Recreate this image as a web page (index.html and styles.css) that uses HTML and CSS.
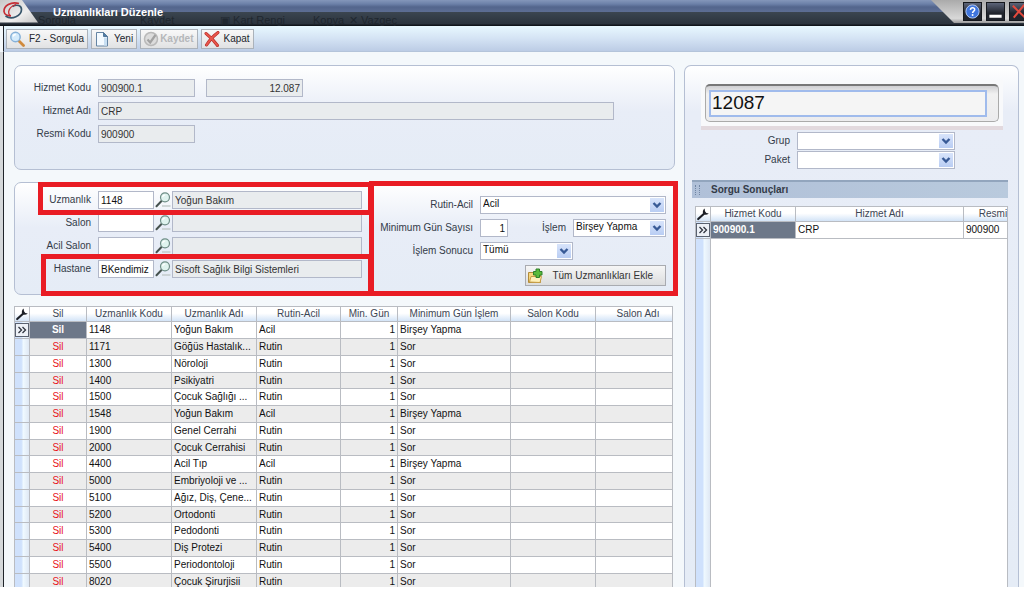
FILE: index.html
```html
<!DOCTYPE html>
<html lang="tr">
<head>
<meta charset="utf-8">
<title>Uzmanlıkları Düzenle</title>
<link rel="stylesheet" href="styles.css">
</head>
<body>
<svg class="defs" aria-hidden="true">
  <symbol id="lens" viewBox="0 0 16 16">
    <path d="M7 14h8.500" stroke="#c3cbcb" stroke-width="1.500"/>
    <path d="M6.500 9 1.500 14.200" stroke="#46524f" stroke-width="2" stroke-linecap="round"/>
    <circle cx="10" cy="5.300" r="4.500" fill="#dff3ef" stroke="#6f8e87" stroke-width="1.200"/>
    <path d="M7.600 5.200Q8 3 10.200 3" stroke="#fff" fill="none" stroke-width="1.200"/>
  </symbol>
  <symbol id="wrench" viewBox="0 0 14 14">
    <path d="M2.200 12 8 6.800" stroke="#1c1f26" stroke-width="2.200" stroke-linecap="round"/>
    <path d="M8.600 1.500C7 2.800 6.300 5 7.200 6.700c1.200 1.600 3.700 1.500 5.600-.2L10.300 5.900 9 4.300z" fill="#1c1f26"/>
  </symbol>
  <symbol id="chevrons" viewBox="0 0 12 12">
    <path d="m2.500 3 3 3-3 3M6.500 3l3 3-3 3" fill="none" stroke="#30353f" stroke-width="1.300"/>
  </symbol>
</svg>
<div class="window">
  <header class="titlebar">
    <div class="ghost" aria-hidden="true">
      <span>Sorgula</span><span>Kaydet</span><span>▣ Kart Rengi</span><span>Kopya</span><span>✕ Vazgeç</span>
    </div>
    <svg class="logo" viewBox="0 0 38 24" aria-hidden="true">
      <defs><linearGradient id="tab" x1="0" y1="0" x2="1" y2="1"><stop offset="0" stop-color="#c9c9c9"/><stop offset=".6" stop-color="#eee"/><stop offset="1" stop-color="#c4c4c4"/></linearGradient></defs>
      <path d="M0 0H22L38 22.500H0z" fill="url(#tab)"/>
      <path d="M19 3.500C11 1 3.500 6 4 11.500c.4 3.500 4 4.500 7 4" fill="none" stroke="#c52d34" stroke-width="1.700"/>
      <path d="M5.500 16C12 20.500 21.500 15.500 21.500 9.500 21.500 5.500 17 4 12.500 6.500" fill="none" stroke="#37566b" stroke-width="1.700"/>
      <path d="M10.500 16.500C7 12.500 8.500 7 16 4.500" fill="none" stroke="#c52d34" stroke-width="1.300"/>
    </svg>
    <h1 class="title">Uzmanlıkları Düzenle</h1>
    <div class="controls">
      <button class="control" type="button" aria-label="Yardım"><svg viewBox="0 0 18 18"><circle cx="9" cy="9" r="7" fill="#3f75dd" stroke="#b9d0fa"/><path d="M6.800 7.300Q6.900 5 9.100 5T11.300 7.100C11.300 8.600 9.100 8.700 9.100 10.600" fill="none" stroke="#fff" stroke-width="1.600"/><circle cx="9.100" cy="12.700" r="1" fill="#fff"/></svg></button>
      <button class="control" type="button" aria-label="Küçült"><svg viewBox="0 0 18 18"><path d="M2.500 12.500h13v3h-13z" fill="#fff"/></svg></button>
      <button class="control" type="button" aria-label="Pencereyi kapat"><svg viewBox="0 0 18 18"><path d="M3 3 16 15.500M15 2 4 15.500" stroke="#e2493d" stroke-width="2.200"/></svg></button>
    </div>
  </header>

  <nav class="toolbar">
    <button class="tool" type="button"><svg viewBox="0 0 16 16"><path d="m9.500 9.500 5 5" stroke="#d08a3c" stroke-width="2.800" stroke-linecap="round"/><circle cx="6.500" cy="6" r="4.700" fill="#d4ebfb" stroke="#86b1d8" stroke-width="1.500"/><path d="M4 5.500Q4.500 3.500 6.800 3.500" fill="none" stroke="#fff" stroke-width="1.300"/></svg>F2 - Sorgula</button>
    <button class="tool" type="button"><svg viewBox="0 0 16 16"><path d="M2.500 1.500h7l4 4v9.500h-11z" fill="#f3faff" stroke="#6585a4"/><path d="M9.500 1.500v4h4z" fill="#4e7ea8" stroke="#55789a"/><path d="M10 6.500h3v8h-3z" fill="#c8dff2"/></svg>Yeni</button>
    <button class="tool" type="button" disabled><svg viewBox="0 0 16 16"><circle cx="8" cy="8" r="6.500" fill="#dcdcdc" stroke="#b9b9b9" stroke-width="1.500"/><path d="m4.500 8.500 2.700 3L12.500 4" fill="none" stroke="#a2a2a2" stroke-width="2.200"/></svg>Kaydet</button>
    <button class="tool" type="button"><svg viewBox="0 0 16 16"><path d="M2 2.500Q8 7 13.500 14.500M14 1.500Q7 6.500 2.500 14" fill="none" stroke="#b82a25" stroke-width="3" stroke-linecap="round"/><path d="M2 2.500Q8 7 13.500 14.500M14 1.500Q7 6.500 2.500 14" fill="none" stroke="#e8574c" stroke-width="1.700" stroke-linecap="round"/></svg>Kapat</button>
  </nav>

  <main class="content">
    <div class="editor">
      <section class="panel service">
        <label for="kod">Hizmet Kodu</label>
        <div class="pair"><input id="kod" class="box code" value="900900.1" readonly><input class="box code num" aria-label="Hizmet numarası" value="12.087" readonly></div>
        <label for="ad">Hizmet Adı</label>
        <input id="ad" class="box name" value="CRP" readonly>
        <label for="resmi">Resmi Kodu</label>
        <input id="resmi" class="box code" value="900900" readonly>
      </section>

      <section class="panel criteria">
        <div class="lookups">
          <label for="uzm">Uzmanlık</label>
          <div class="lookup"><input id="uzm" class="box" value="1148"><button class="find" type="button" aria-label="Uzmanlık ara"><svg><use href="#lens"/></svg></button><input class="box" aria-label="Uzmanlık adı" value="Yoğun Bakım" readonly></div>
          <label for="salon">Salon</label>
          <div class="lookup"><input id="salon" class="box"><button class="find" type="button" aria-label="Salon ara"><svg><use href="#lens"/></svg></button><input class="box" aria-label="Salon adı" readonly></div>
          <label for="acil">Acil Salon</label>
          <div class="lookup"><input id="acil" class="box"><button class="find" type="button" aria-label="Acil salon ara"><svg><use href="#lens"/></svg></button><input class="box" aria-label="Acil salon adı" readonly></div>
          <label for="has">Hastane</label>
          <div class="lookup"><input id="has" class="box" value="BKendimiz"><button class="find" type="button" aria-label="Hastane ara"><svg><use href="#lens"/></svg></button><input class="box" aria-label="Hastane adı" value="Sisoft Sağlık Bilgi Sistemleri" readonly></div>
        </div>
        <div class="options">
          <label for="rutin">Rutin-Acil</label>
          <select id="rutin" class="box wide"><option>Acil</option></select>
          <label for="gun">Minimum Gün Sayısı</label>
          <input id="gun" class="box num" value="1">
          <label for="islem">İşlem</label>
          <select id="islem" class="box"><option>Birşey Yapma</option></select>
          <label for="sonuc">İşlem Sonucu</label>
          <select id="sonuc" class="box half"><option>Tümü</option></select>
          <button class="add" type="button"><svg viewBox="0 0 16 16"><path d="M1.500 4.500h5l1 2h6v8h-12z" fill="#f6d77e" stroke="#b28b39"/><path d="M2.500 14 4 8.500h10.500l-1.500 6z" fill="#fff0b8" stroke="#c79d46"/><path d="M9 1h3.500v2.500H15V7h-2.500v2.500H9V7H6.500V3.500H9z" fill="#5abb3a" stroke="#2f812a"/></svg><span>Tüm Uzmanlıkları Ekle</span></button>
        </div>
        <div class="mark mark-top"></div>
        <div class="mark mark-bottom"></div>
        <div class="mark mark-right"></div>
      </section>

      <div class="gridbox">
        <table class="data specialties">
          <colgroup><col class="c-gutter"><col class="c-small"><col><col><col class="c-rutin"><col class="c-small"><col class="c-action"><col><col></colgroup>
          <thead><tr><th><svg class="wrench"><use href="#wrench"/></svg></th><th>Sil</th><th>Uzmanlık Kodu</th><th>Uzmanlık Adı</th><th>Rutin-Acil</th><th>Min. Gün</th><th>Minimum Gün İşlem</th><th>Salon Kodu</th><th>Salon Adı</th></tr></thead>
          <tbody>
            <tr class="current"><td><svg class="pointer"><use href="#chevrons"/></svg></td><td>Sil</td><td>1148</td><td>Yoğun Bakım</td><td>Acil</td><td>1</td><td>Birşey Yapma</td><td></td><td></td></tr>
            <tr><td></td><td>Sil</td><td>1171</td><td>Göğüs Hastalık...</td><td>Rutin</td><td>1</td><td>Sor</td><td></td><td></td></tr>
            <tr><td></td><td>Sil</td><td>1300</td><td>Nöroloji</td><td>Rutin</td><td>1</td><td>Sor</td><td></td><td></td></tr>
            <tr><td></td><td>Sil</td><td>1400</td><td>Psikiyatri</td><td>Rutin</td><td>1</td><td>Sor</td><td></td><td></td></tr>
            <tr><td></td><td>Sil</td><td>1500</td><td>Çocuk Sağlığı ...</td><td>Rutin</td><td>1</td><td>Sor</td><td></td><td></td></tr>
            <tr><td></td><td>Sil</td><td>1548</td><td>Yoğun Bakım</td><td>Acil</td><td>1</td><td>Birşey Yapma</td><td></td><td></td></tr>
            <tr><td></td><td>Sil</td><td>1900</td><td>Genel Cerrahi</td><td>Rutin</td><td>1</td><td>Sor</td><td></td><td></td></tr>
            <tr><td></td><td>Sil</td><td>2000</td><td>Çocuk Cerrahisi</td><td>Rutin</td><td>1</td><td>Sor</td><td></td><td></td></tr>
            <tr><td></td><td>Sil</td><td>4400</td><td>Acil Tıp</td><td>Acil</td><td>1</td><td>Birşey Yapma</td><td></td><td></td></tr>
            <tr><td></td><td>Sil</td><td>5000</td><td>Embriyoloji ve ...</td><td>Rutin</td><td>1</td><td>Sor</td><td></td><td></td></tr>
            <tr><td></td><td>Sil</td><td>5100</td><td>Ağız, Diş, Çene...</td><td>Rutin</td><td>1</td><td>Sor</td><td></td><td></td></tr>
            <tr><td></td><td>Sil</td><td>5200</td><td>Ortodonti</td><td>Rutin</td><td>1</td><td>Sor</td><td></td><td></td></tr>
            <tr><td></td><td>Sil</td><td>5300</td><td>Pedodonti</td><td>Rutin</td><td>1</td><td>Sor</td><td></td><td></td></tr>
            <tr><td></td><td>Sil</td><td>5400</td><td>Diş Protezi</td><td>Rutin</td><td>1</td><td>Sor</td><td></td><td></td></tr>
            <tr><td></td><td>Sil</td><td>5500</td><td>Periodontoloji</td><td>Rutin</td><td>1</td><td>Sor</td><td></td><td></td></tr>
            <tr><td></td><td>Sil</td><td>8020</td><td>Çocuk Şirurjisii</td><td>Rutin</td><td>1</td><td>Sor</td><td></td><td></td></tr>
          </tbody>
        </table>
      </div>
    </div>

    <aside class="panel search">
      <div class="searchframe"><div class="searchwell"><input class="query" aria-label="Sorgu" value="12087"></div></div>
      <div class="filters">
        <label for="grup">Grup</label><select id="grup" class="box"><option></option></select>
        <label for="paket">Paket</label><select id="paket" class="box"><option></option></select>
      </div>
      <h2 class="results-title"><span class="grip"></span>Sorgu Sonuçları</h2>
      <div class="results">
        <table class="data found">
          <colgroup><col class="c-gutter"><col><col class="c-name"><col></colgroup>
          <thead><tr><th><svg class="wrench"><use href="#wrench"/></svg></th><th>Hizmet Kodu</th><th>Hizmet Adı</th><th>Resmi Kodu</th></tr></thead>
          <tbody><tr class="current"><td><svg class="pointer"><use href="#chevrons"/></svg></td><td>900900.1</td><td>CRP</td><td>900900</td></tr></tbody>
        </table>
      </div>
    </aside>
  </main>
</div>
</body>
</html>
```
FILE: styles.css
```css
* { box-sizing: border-box; }

body {
  margin: 0;
  height: 100vh;
  padding-bottom: 19px;
  overflow: hidden;
  background: #fff;
  color: #333b48;
  font: 10px/14px "Liberation Sans", Arial, sans-serif;
}

input, select, button { font: inherit; color: inherit; margin: 0; border-radius: 0; }
svg { display: block; }
.defs { position: absolute; width: 0; height: 0; }

.window {
  display: flex;
  flex-direction: column;
  height: 100%;
  overflow: hidden;
  background: #f4f8fb;
}

/* Title bar */
.titlebar {
  position: relative;
  display: flex;
  flex: none;
  height: 26px;
  background: linear-gradient(#8496ba 0, #6c80a8 4px, #53658c 7px, #5d6e94 12px, #3b4550 12px, #2b333d 24px, #10151b 25px, #10151b);
}
.logo { width: 38px; height: 24px; flex: none; }
.title {
  position: relative;
  flex: 1;
  margin: 0;
  padding: 5px 0 0 15px;
  color: #fff;
  font-size: 11px;
  line-height: 14px;
}
.ghost {
  position: absolute;
  left: 38px;
  top: 14px;
  display: grid;
  grid-template-columns: 102px 80px 93px 36px auto;
  color: #20272f;
  font-size: 11px;
  line-height: 12px;
}
.controls {
  display: flex;
  gap: 4px;
  height: 23px;
  padding: 2px 0 3px 32px;
  margin-right: -4px;
  background: linear-gradient(#aaa, #d8d8d8 80%, #999);
  clip-path: polygon(0 0, 100% 0, 100% 100%, 23px 100%);
}
.control {
  width: 19px;
  height: 19px;
  padding: 0;
  border: 1px solid #15181d;
  background: linear-gradient(#5c6478, #20242c 60%);
}
.control svg { width: 17px; height: 17px; }

/* Toolbar */
.toolbar {
  display: flex;
  flex: none;
  gap: 3px;
  height: 26px;
  padding: 3px 2px;
  margin-left: 3px;
  border-left: 1px solid #20242a;
  border-bottom: 1px solid #b4c4da;
  background: linear-gradient(#e8f8ff, #d4e3f4 50%, #bccce5);
}
.tool {
  display: flex;
  align-items: center;
  gap: 4px;
  height: 20px;
  padding: 0 3px 0 2px;
  border: 1px solid #abb2ba;
  background: linear-gradient(#f8f8f8, #e1e2e3);
  color: #22262d;
}
.tool svg { width: 16px; height: 16px; }
.tool:disabled { color: #b5b7ba; font-weight: bold; gap: 1px; }

/* Page body */
.content {
  display: grid;
  grid-template-columns: minmax(0, 661fr) minmax(0, 335fr);
  gap: 9px;
  flex: 1;
  min-height: 0;
  margin-left: 3px;
  padding: 13px 5px 0 10px;
  border-left: 1px solid #20242a;
  box-shadow: -3px 0 #d5d8da;
}
.panel {
  border: 1px solid #b5bfd3;
  border-radius: 7px;
  background: linear-gradient(#fff, #e8edf7 45px, #e5ecf6);
}
.editor { display: flex; flex-direction: column; gap: 12px; min-height: 0; }
label { text-align: right; white-space: nowrap; }

.box {
  height: 18px;
  min-width: 0;
  padding: 0 2px;
  border: 1px solid #b2b8c9;
  background-color: #fff;
  color: #111;
  outline: 0;
}
.box:read-only:not(select) { background-color: #e9ecee; color: #333; }
.num { text-align: right; }
select.box {
  appearance: none;
  width: 100%;
  padding: 0 18px 2px 2px;
  line-height: 14px;
  background-image:
    url("data:image/svg+xml,%3Csvg xmlns='http://www.w3.org/2000/svg' width='14' height='14'%3E%3Cpath d='M3.500 5 7 8.500 10.500 5' fill='none' stroke='%23385a96' stroke-width='2.400'/%3E%3C/svg%3E"),
    linear-gradient(#d8e4fb, #b9cdf3);
  background-repeat: no-repeat;
  background-position: right 1px center;
  background-size: 14px 14px;
}

.service {
  display: grid;
  grid-template-columns: 76px minmax(0, 1fr);
  gap: 5px 7px;
  align-items: center;
  flex: none;
  padding: 13px 60px 26px 0;
}
.pair { display: flex; gap: 11px; }
.code { width: 97px; }
.name { width: 100%; }

.criteria {
  position: relative;
  display: grid;
  grid-template-columns: minmax(0, 347fr) minmax(0, 304fr);
  flex: none;
  padding: 8px 8px 8px 0;
}
.lookups {
  display: grid;
  grid-template-columns: 76px minmax(0, 1fr);
  align-content: start;
  align-items: center;
  gap: 5px 7px;
}
.lookup { display: grid; grid-template-columns: 56px 18px minmax(0, 1fr); }
.find { padding: 0 1px; border: 0; background: none; }
.find svg { width: 16px; height: 16px; }
.options {
  display: grid;
  grid-template-columns: 118px 28px minmax(0, 65fr) minmax(0, 93fr);
  align-items: center;
  row-gap: 5px;
  padding-top: 5px;
}
.options label { padding-right: 7px; }
.options .wide { grid-column: 2 / 5; }
.options .half { grid-column: 2 / 4; }
.add {
  grid-column: 2 / 5;
  justify-self: end;
  display: flex;
  align-items: center;
  gap: 9px;
  height: 21px;
  padding: 0 12px 0 1px;
  border: 1px solid #a9abb0;
  background: linear-gradient(#f6f6f6, #dcddde);
  color: #333;
}
.add svg { width: 16px; height: 16px; }

/* Emphasis frames drawn over the form */
.mark { position: absolute; border: 5px solid #e91c24; pointer-events: none; }
.mark-top { left: 23px; right: 301px; top: -1px; height: 33px; }
.mark-bottom { left: 26px; right: 301px; top: 71px; bottom: -2px; }
.mark-right { left: 354px; right: -4px; top: -2px; bottom: -2px; }

/* Data tables */
.gridbox {
  flex: 1;
  min-height: 0;
  margin: -1px 2px 0 0;
  overflow: hidden;
  border-right: 1px solid #b9bcc2;
}
.data { table-layout: fixed; border-collapse: separate; border-spacing: 0; color: #111; }
.specialties { width: 667px; }
.found { width: 354px; }
.data col { width: 85px; }
.data .c-gutter { width: 16px; }
.data .c-small { width: 57px; }
.data .c-rutin { width: 84px; }
.data .c-action { width: 113px; }
.data .c-name { width: 168px; }
.data th, .data td {
  height: 17px;
  padding: 0 2px;
  overflow: hidden;
  border-right: 1px solid #b9bcc2;
  border-bottom: 1px solid #b9bcc2;
  line-height: 14px;
  text-align: left;
  text-overflow: ellipsis;
  white-space: nowrap;
}
.data th {
  height: 16px;
  border-top: 1px solid #b9bcc2;
  background: linear-gradient(#fff 45%, #d3e4f7);
  color: #3d4654;
  font-weight: normal;
  text-align: center;
}
.data td { background: #fff; }
.data tr:nth-child(even) td { background: #ececec; }
.specialties tbody tr:nth-child(4n) td { height: 16px; }
.data tr th:first-child, .data tr td:first-child {
  padding: 0;
  border-left: 1px solid #b9bcc2;
}
.data tr td:first-child { background: linear-gradient(90deg, #cfe1fc 45%, #eff9ff 60%, #dfe8f4); }
.specialties td:nth-child(2) { color: #e8131b; text-align: center; }
.specialties td:nth-child(6) { text-align: right; }
.data .current td:nth-child(2) { background: #6d7889; color: #fff; font-weight: bold; }
.wrench { width: 14px; height: 14px; }
.pointer {
  width: 14px;
  height: 14px;
  border: 1px solid #5a6270;
  background: #edf1f7;
}

/* Search side panel */
.search {
  display: flex;
  flex-direction: column;
  min-height: 0;
  padding: 14px 10px 0 7px;
  border-bottom: 0;
  border-radius: 7px 7px 0 0;
}
.searchframe {
  margin: 0 5px 0 9px;
  padding: 4px;
  border-bottom: 4px solid #e2d9de;
  background: #f8f9fb;
}
.searchwell {
  padding: 4px 11px 4px 3px;
  border: 1px solid #aaa;
  border-top: 2px solid #777;
  border-radius: 5px;
  background: linear-gradient(#cfcfd2, #f1f1f1 8px, #ececee);
}
.query {
  display: block;
  width: 100%;
  height: 27px;
  padding: 0 1px 2px;
  border: 2px solid #a0bbec;
  background: #f5f5f5;
  color: #111;
  font-size: 19px;
  outline: 0;
}
.filters {
  display: grid;
  grid-template-columns: 98px minmax(0, 158px);
  align-items: center;
  gap: 1px 7px;
  padding-top: 2px;
}
.results-title {
  display: flex;
  align-items: center;
  gap: 11px;
  margin: 11px 0 8px;
  padding: 0 0 1px 3px;
  border-top: 2px solid #92a5bd;
  background: linear-gradient(90deg, #b0c0d8, #b9cadd);
  color: #333b48;
  font-size: 10px;
  line-height: 15px;
}
.grip {
  width: 5px;
  height: 10px;
  border: 2px dotted #7186a4;
  border-width: 0 1px;
}
.results {
  flex: 1;
  min-height: 0;
  margin-left: 3px;
  overflow: hidden;
  border-right: 1px solid #b9bcc2;
  background: linear-gradient(90deg, #b9bcc2 1px, #cfe1fc 1px, #cfe1fc 8px, #eff9ff 9px, #dfe8f4 15px, #b9bcc2 15px, #b9bcc2 16px, #fff 16px);
}
```
